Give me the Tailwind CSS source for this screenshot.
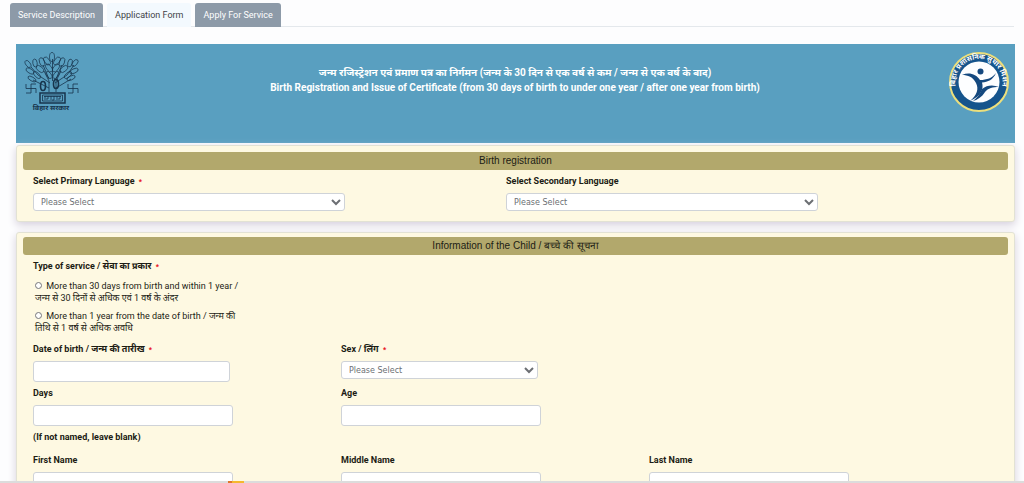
<!DOCTYPE html>
<html lang="en">

<head>
    <meta charset="utf-8">
    <meta name="viewport" content="width=device-width, initial-scale=1">
    <title>Birth Registration</title>
    <script src="https://cdn.jsdelivr.net/npm/@tailwindcss/browser@4"></script>
</head>

<body class="h-screen overflow-hidden bg-[#fdfdfe] font-['Roboto','Liberation_Sans','Noto_Sans_Devanagari','Noto_Sans',sans-serif] text-[9px] leading-3 text-[#1c1c14]">
    <!-- Tabs -->
    <nav class="mx-[10px] mt-[3px] flex h-6 gap-1 border-b border-[#e4e8ec]">
        <a href="#" class="h-6 rounded-t-[3px] bg-[#8d9aa8] px-2 pt-[6px] text-white">Service Description</a>
        <a href="#" class="h-6 rounded-t-[3px] bg-[#f3f9fe] px-2 pt-[6px] text-[#3f4347]">Application Form</a>
        <a href="#" class="h-6 rounded-t-[3px] bg-[#8d9aa8] px-2 pt-[6px] text-white">Apply For Service</a>
    </nav>

    <main class="mr-[9px] ml-4 pt-[17px]">
        <!-- Banner -->
        <header class="flex items-start justify-between bg-[#599fc0] pt-[7px] pr-[5px] pb-[30px] pl-2">
            <svg class="h-[62px] w-[58px]" viewBox="0 0 58 62" fill="none" stroke="#17344c" stroke-width="0.8">
                <path d="M25 41V30L20 20M32 41V30L37 20M28.500 30V8M26 32L14 24L7 16M31 32L43 24L50 14M25 28L19 14M32 28L38 14M25 37L9 29M32 37L47 28" />
                <g stroke-width="0.7">
                    <ellipse cx="28" cy="6" rx="2.500" ry="4.500" />
                    <ellipse cx="23" cy="10" rx="2.500" ry="4.500" transform="rotate(-35 23 10)" />
                    <ellipse cx="33" cy="10" rx="2.500" ry="4.500" transform="rotate(35 33 10)" />
                    <ellipse cx="25" cy="17" rx="2.500" ry="4.500" transform="rotate(-35 25 17)" />
                    <ellipse cx="32" cy="17" rx="2.500" ry="4.500" transform="rotate(35 32 17)" />
                    <ellipse cx="25" cy="24" rx="2.200" ry="4" transform="rotate(-35 25 24)" />
                    <ellipse cx="32" cy="24" rx="2.200" ry="4" transform="rotate(35 32 24)" />
                    <ellipse cx="18" cy="11" rx="2.500" ry="4.500" transform="rotate(-20 18 11)" />
                    <ellipse cx="38" cy="11" rx="2.500" ry="4.500" transform="rotate(20 38 11)" />
                    <ellipse cx="16" cy="18" rx="2.500" ry="4.500" transform="rotate(-50 16 18)" />
                    <ellipse cx="40" cy="18" rx="2.500" ry="4.500" transform="rotate(50 40 18)" />
                    <ellipse cx="11" cy="12" rx="2.200" ry="4" transform="rotate(-10 11 12)" />
                    <ellipse cx="46" cy="12" rx="2.200" ry="4" transform="rotate(15 46 12)" />
                    <ellipse cx="4" cy="13" rx="2.200" ry="4" transform="rotate(-35 4 13)" />
                    <ellipse cx="51" cy="12" rx="2.200" ry="4" transform="rotate(40 51 12)" />
                    <ellipse cx="6" cy="20" rx="2.200" ry="4.500" transform="rotate(-60 6 20)" />
                    <ellipse cx="50" cy="20" rx="2.200" ry="4.500" transform="rotate(65 50 20)" />
                    <ellipse cx="13" cy="24" rx="2.200" ry="4.500" transform="rotate(-45 13 24)" />
                    <ellipse cx="44" cy="24" rx="2.200" ry="4.500" transform="rotate(50 44 24)" />
                    <ellipse cx="8" cy="28" rx="2" ry="4.500" transform="rotate(-60 8 28)" />
                    <ellipse cx="47" cy="27" rx="2" ry="4.500" transform="rotate(65 47 27)" />
                </g>
                <ellipse cx="19" cy="35" rx="2.500" ry="4.500" stroke-width="1.600" />
                <ellipse cx="32" cy="33" rx="2.500" ry="4.500" stroke-width="1.600" />
                <g stroke-width="0.8">
                    <path d="M2 33V37.500H12M7 33V42M7 33H12M2 42H7M12 37.500V42" />
                    <path d="M44 33V37.500H54M49 33V42M49 33H54M44 42H49M54 37.500V42" />
                </g>
                <path d="M16 42H41V52H16z" stroke-width="1.500" />
                <path d="M18.500 44H38.500V50H18.500zM20 45.500H37M21 45V49M24 45V48H22M27 45V49M30 45V49H28M33 45V49M36 45V48H34" />
                <text x="27" y="59" text-anchor="middle" font-size="7" font-weight="bold" fill="#17344c" stroke="none">बिहार सरकार</text>
            </svg>
            <h1 class="mt-[14px] text-center text-[10px] leading-[15px] font-bold text-white">
                जन्म रजिस्ट्रेशन एवं प्रमाण पत्र का निर्गमन (जन्म के 30 दिन से एक वर्ष से कम / जन्म से एक वर्ष के बाद)<br>
                Birth Registration and Issue of Certificate (from 30 days of birth to under one year / after one year from birth)
            </h1>
            <svg class="h-[62px] w-[62px]" viewBox="0 0 62 62">
                <circle cx="31" cy="31" r="29" fill="#15548c" stroke="#ecdf7c" stroke-width="2" />
                <circle cx="31" cy="31" r="20.500" fill="#fdfeff" />
                <path id="sealArc" d="M10.500 43A23.500 23.500 0 1 1 51.500 43" fill="none" />
                <text font-size="7" font-weight="bold" fill="#fff" text-anchor="middle">
                    <textPath href="#sealArc" startOffset="50%">बिहार प्रशासनिक सुधार मिशन</textPath>
                </text>
                <g fill="#15497f">
                    <circle cx="32.500" cy="20.500" r="3" />
                    <path d="M14 24C21 21 28 23 32 29C39 29 44 27 48 22C45 29 40 31 34 31.500C36 38 33 45 22 50C29 44 31 38 28 32C25 26 20 24 14 24z" />
                    <path d="M34 38C39 34 45 33.500 51 36C45 36 40 37 37 41C34 46 29 49 25 50C29 47 32 43 34 38z" />
                </g>
            </svg>
        </header>

        <!-- Language -->
        <section class="mt-[2px] rounded-[3px] border border-[#e2e2d4] bg-[#fef9e2] px-[6px] pt-[6px] pb-[10px] shadow-[0_3px_9px_#d5cfdc]">
            <h2 class="rounded-[3px] bg-[#b2a86c] text-center font-['Liberation_Sans',sans-serif] text-[10px] leading-[18px]">Birth registration</h2>
            <div class="mr-[29px] ml-[10px] grid grid-cols-2 pt-[5px]">
                <div>
                    <label for="primary" class="block font-bold">Select Primary Language <span class="ml-[2px] text-[7px] leading-none text-red-600">*</span></label>
                    <select id="primary" class="mt-[6px] block h-[18px] w-[66%] rounded-[3px] border border-[#cfd3d8] bg-white pl-[3px] font-['DejaVu_Sans'] text-[8px] text-[#6c6f73]">
                        <option>Please Select</option>
                    </select>
                </div>
                <div>
                    <label for="secondary" class="block font-bold">Select Secondary Language</label>
                    <select id="secondary" class="mt-[6px] block h-[18px] w-[66%] rounded-[3px] border border-[#cfd3d8] bg-white pl-[3px] font-['DejaVu_Sans'] text-[8px] text-[#6c6f73]">
                        <option>Please Select</option>
                    </select>
                </div>
            </div>
        </section>

        <!-- Child information -->
        <section class="mt-[10px] rounded-[3px] border border-[#e2e2d4] bg-[#fef9e2] px-[6px] pt-[4px] pb-6 shadow-[0_3px_9px_#d5cfdc]">
            <h2 class="rounded-[3px] bg-[#b2a86c] text-center font-['Liberation_Sans',sans-serif] text-[10px] leading-[18px]">Information of the Child / बच्चे की सूचना</h2>
            <div class="mr-[51px] ml-[10px] pt-[5px]">
                <fieldset>
                    <legend class="font-bold">Type of service / सेवा का प्रकार <span class="ml-[2px] text-[7px] leading-none text-red-600">*</span></legend>
                    <div class="ml-[2px] w-[204px] pt-[8px]">
                        <input type="radio" name="service" id="within" class="m-0 mr-[2px] h-[7px] w-[7px]">
                        <label for="within">More than 30 days from birth and within 1 year / जन्म से 30 दिनों से अधिक एवं 1 वर्ष के अंदर</label>
                    </div>
                    <div class="ml-[2px] w-[204px] pt-[6px]">
                        <input type="radio" name="service" id="after" class="m-0 mr-[2px] h-[7px] w-[7px]">
                        <label for="after">More than 1 year from the date of birth / जन्म की तिथि से 1 वर्ष से अधिक अवधि</label>
                    </div>
                </fieldset>
                <div class="grid grid-cols-3 pt-[9px]">
                    <div>
                        <label for="dob" class="block font-bold">Date of birth / जन्म की तारीख <span class="ml-[2px] text-[7px] leading-none text-red-600">*</span></label>
                        <input id="dob" type="text" class="mt-[6px] block h-[21px] w-[64%] rounded-[3px] border border-[#cfd3d8] bg-white px-2">
                    </div>
                    <div>
                        <label for="sex" class="block font-bold">Sex / लिंग <span class="ml-[2px] text-[7px] leading-none text-red-600">*</span></label>
                        <select id="sex" class="mt-[6px] block h-[18px] w-[64%] rounded-[3px] border border-[#cfd3d8] bg-white pl-[3px] font-['DejaVu_Sans'] text-[8px] text-[#6c6f73]">
                            <option>Please Select</option>
                        </select>
                    </div>
                </div>
                <div class="grid grid-cols-3 pt-[5px]">
                    <div>
                        <label for="days" class="block font-bold">Days</label>
                        <input id="days" type="text" class="mt-[6px] block h-[21px] w-[65%] rounded-[3px] border border-[#cfd3d8] bg-white px-2">
                    </div>
                    <div>
                        <label for="age" class="block font-bold">Age</label>
                        <input id="age" type="text" class="mt-[6px] block h-[21px] w-[65%] rounded-[3px] border border-[#cfd3d8] bg-white px-2">
                    </div>
                </div>
                <p class="pt-[5px] font-bold">(If not named, leave blank)</p>
                <div class="grid grid-cols-3 pt-[11px]">
                    <div>
                        <label for="first" class="block font-bold">First Name</label>
                        <input id="first" type="text" class="mt-[6px] block h-[21px] w-[65%] rounded-[3px] border border-[#cfd3d8] bg-white px-2">
                    </div>
                    <div>
                        <label for="middle" class="block font-bold">Middle Name</label>
                        <input id="middle" type="text" class="mt-[6px] block h-[21px] w-[65%] rounded-[3px] border border-[#cfd3d8] bg-white px-2">
                    </div>
                    <div>
                        <label for="last" class="block font-bold">Last Name</label>
                        <input id="last" type="text" class="mt-[6px] block h-[21px] w-[65%] rounded-[3px] border border-[#cfd3d8] bg-white px-2">
                    </div>
                </div>
            </div>
        </section>
    </main>

    <!-- Strip along the window's bottom edge -->
    <div class="fixed inset-x-0 bottom-0 flex h-[2px] bg-[#dcdcdc]">
        <span class="ml-[228px] w-1 bg-[#e0762a]"></span>
        <span class="w-3 bg-[#f5b82e]"></span>
    </div>
</body>

</html>
